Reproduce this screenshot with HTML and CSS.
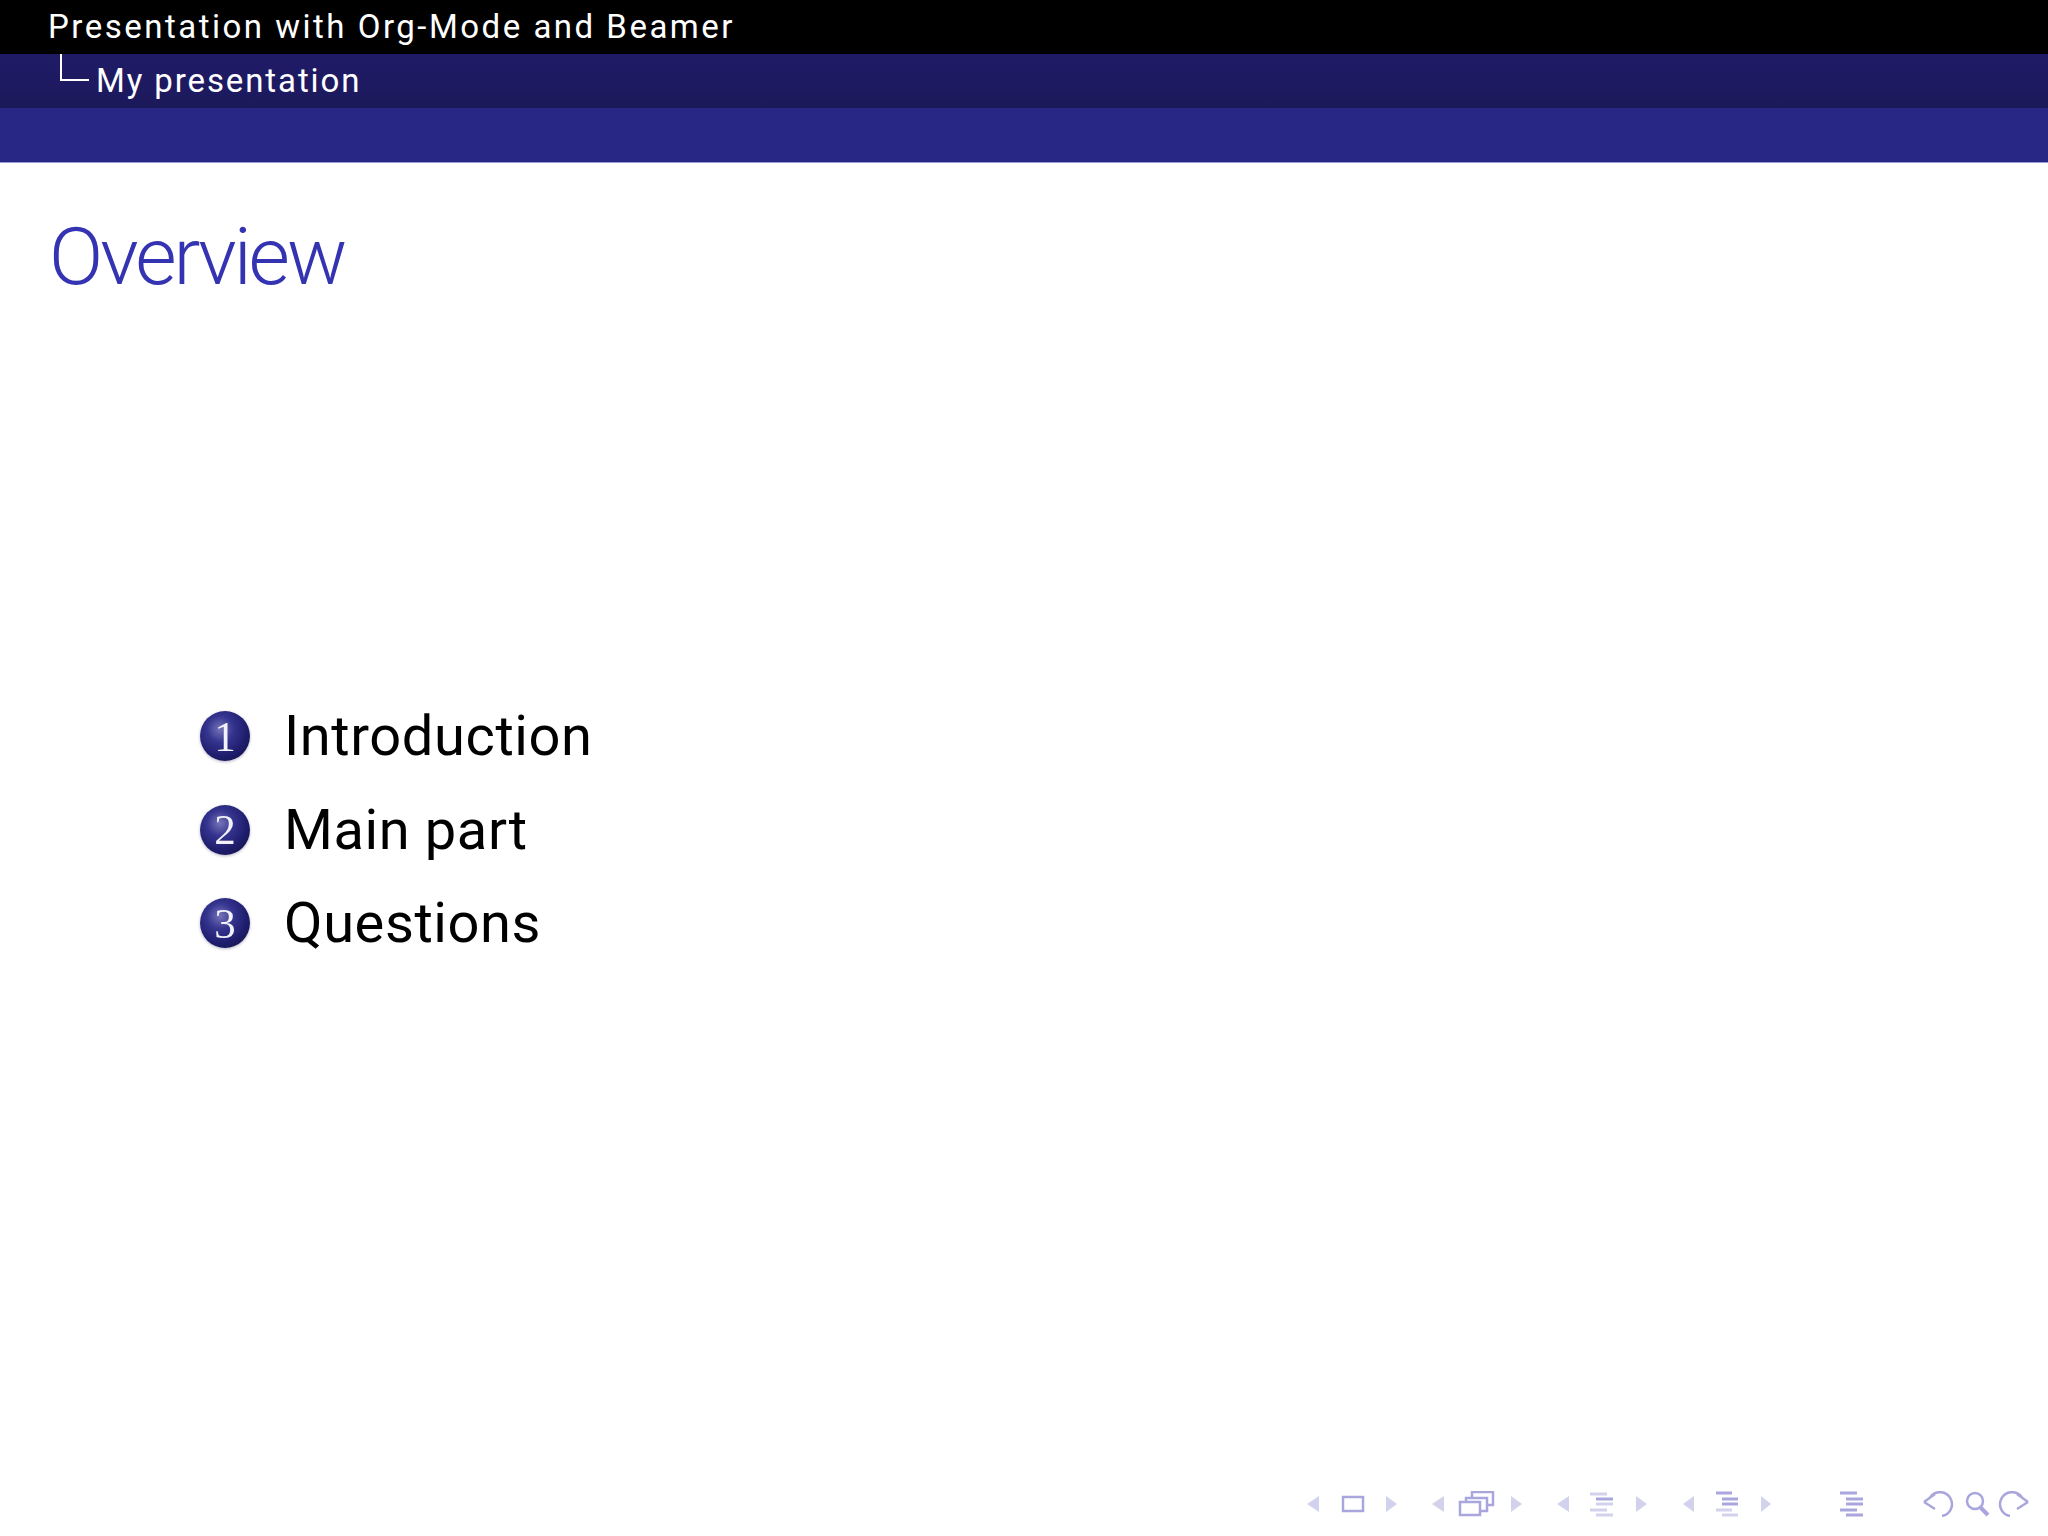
FILE: index.html
```html
<!DOCTYPE html>
<html lang="en">
<head>
<meta charset="utf-8">
<title>Overview</title>
<link rel="stylesheet" href="styles.css">
</head>
<body>
<div class="slide">
  <header class="head">
    <div class="bar bar-black"><span class="pres">Presentation with Org-Mode and Beamer</span></div>
    <div class="bar bar-dark">
      <span class="branch"></span>
      <span class="sub">My presentation</span>
    </div>
    <div class="bar bar-blue"></div>
  </header>
  <h1 class="title">Overview</h1>
  <main class="content">
    <ol class="toc">
      <li class="item"><span class="ball">1</span><span class="label">Introduction</span></li>
      <li class="item"><span class="ball">2</span><span class="label">Main part</span></li>
      <li class="item"><span class="ball">3</span><span class="label">Questions</span></li>
    </ol>
  </main>
  <footer class="nav">
    <svg class="group g90" viewBox="0 0 90 26" aria-hidden="true">
      <path class="tri" d="M12 5v16L0 13z"/>
      <rect class="line" x="36" y="6" width="20" height="14"/>
      <path class="tri" d="M79 5v16l11-8z"/>
    </svg>
    <svg class="group g90" viewBox="0 0 90 26" aria-hidden="true">
      <path class="tri" d="M12 5v16L0 13z"/>
      <path class="line" d="M28 11h20v13H28zM34 11V7h21v13h-7M40 7V1h21v13h-6"/>
      <path class="tri" d="M79 5v16l11-8z"/>
    </svg>
    <svg class="group g90" viewBox="0 0 90 26" aria-hidden="true">
      <path class="tri" d="M12 5v16L0 13z"/>
      <path class="fade" d="M33 3h17M33 19h17M39 24h17M39 13h17"/>
      <path class="bold" d="M39 8h17"/>
      <path class="tri" d="M79 5v16l11-8z"/>
    </svg>
    <svg class="group g88" viewBox="0 0 88 26" aria-hidden="true">
      <path class="tri" d="M11 5v16L0 13z"/>
      <path class="bold" d="M33 2h16M39 8h16M39 13h16"/>
      <path class="fade" d="M33 19h16M39 24h16"/>
      <path class="tri" d="M78 5v16l10-8z"/>
    </svg>
    <svg class="group g23" viewBox="0 0 23 26" aria-hidden="true">
      <path class="bold" d="M0 2h17M6 8h17M6 13h17M0 19h17M6 24h17"/>
    </svg>
    <svg class="group g106" viewBox="0 0 106 26" aria-hidden="true">
      <path class="line" d="M1 11l11-8M1 11l11 7M7 6.500A12 12 0 1 1 19 25"/>
      <circle class="line" cx="52" cy="10" r="8"/>
      <path class="thick" d="M57 16l8 8"/>
      <path class="line" d="M105 11l-11-8M105 11l-11 7M99 6.500A12 12 0 1 0 87 25"/>
    </svg>
  </footer>
</div>
</body>
</html>
```

FILE: styles.css
```css
* { box-sizing: border-box; }
html, body { margin: 0; padding: 0; background: #fff; }
.slide {
  width: 2048px;
  height: 1536px;
  display: flex;
  flex-direction: column;
  overflow: hidden;
  font-family: "Roboto", "Lato", sans-serif;
}
.head { display: flex; flex-direction: column; flex: none; }
.bar { display: flex; align-items: center; color: #fff; font-size: 33px; }
.bar-black { height: 54px; background: #000; padding-left: 48px; }
.pres { line-height: 50px; letter-spacing: 2.500px; }
.bar-dark {
  height: 54px;
  padding-left: 60px;
  background: linear-gradient(#1f1b66 0, #1d1a60 70%, #1a1958 100%);
  align-items: flex-start;
}
.bar-blue { height: 55px; background: #282786; border-bottom: 1px solid #9a99dc; }
.branch {
  width: 29px;
  height: 27px;
  border-left: 2px solid #fff;
  border-bottom: 2px solid #fff;
  flex: none;
}
.sub { margin-left: 7px; line-height: 54px; letter-spacing: 1.900px; }
.title {
  margin: 0;
  padding: 49px 0 0 49px;
  height: 160px;
  flex: none;
  font-size: 80px;
  line-height: 90px;
  font-weight: 300;
  color: #3433b2;
  letter-spacing: -3px;
}
.content { flex: 1; min-height: 0; }
.toc {
  list-style: none;
  margin: 0;
  padding: 382px 0 0 200px;
  display: flex;
  flex-direction: column;
  gap: 33.500px;
}
.item { display: flex; align-items: center; height: 60px; }
.ball {
  width: 50px;
  height: 50px;
  flex: none;
  border-radius: 50%;
  display: flex;
  align-items: center;
  justify-content: center;
  margin-top: 2px;
  font-family: "Liberation Serif", serif;
  font-size: 43px;
  line-height: 1;
  color: #f2f2fb;
  background: radial-gradient(circle at 40% 36%, #7574b8 0, #35348f 30%, #1e1d6c 62%, #16154f 84%, #8d8dae 97%, #d5d5e2 100%);
  box-shadow: 0 1px 3px rgba(40, 40, 90, 0.35);
  filter: blur(0.5px);
}
.label {
  margin: 2px 0 0 34px;
  font-size: 56px;
  line-height: 60px;
  color: #000;
  letter-spacing: 0.600px;
}
.nav {
  flex: none;
  height: 50px;
  padding: 0 19px 15px 0;
  display: flex;
  justify-content: flex-end;
  align-items: center;
  gap: 35px;
}
.group { height: 26px; flex: none; filter: blur(0.5px); }
.g90 { width: 90px; }
.g88 { width: 88px; margin-left: 1px; }
.g23 { width: 23px; margin-left: 34px; }
.g106 { width: 106px; margin-left: 25px; }
.tri { fill: #d3d2ec; }
.line { fill: none; stroke: #a9a6dd; stroke-width: 2.500; }
.thick { fill: none; stroke: #a9a6dd; stroke-width: 4; }
.bold { fill: none; stroke: #a9a6dd; stroke-width: 3; }
.fade { fill: none; stroke: #d3d2ec; stroke-width: 3; }
```
